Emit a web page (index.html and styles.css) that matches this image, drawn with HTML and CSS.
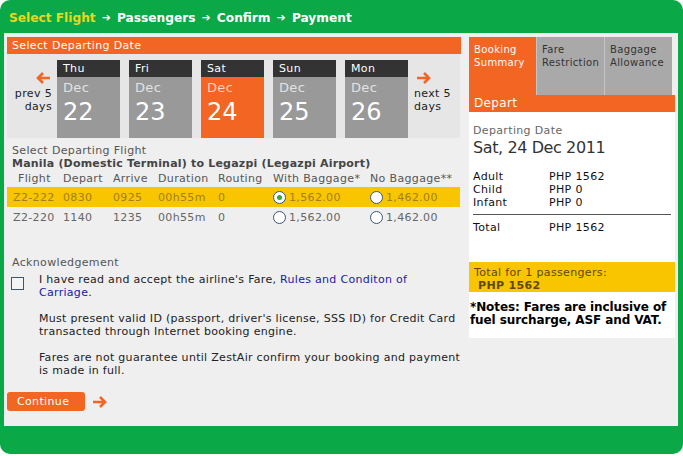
FILE: index.html
```html
<!DOCTYPE html>
<html lang="en">
<head>
  <meta charset="UTF-8">
  <meta name="viewport" content="width=device-width, initial-scale=1.0">
  <title>Select Flight</title>
  <link rel="stylesheet" href="styles.css">
</head>
<body>
  <div class="frame">
    <div class="steps">
      <span class="current">Select Flight</span>
      <span class="sep">&#10132;</span> Passengers
      <span class="sep">&#10132;</span> Confirm
      <span class="sep">&#10132;</span> Payment
    </div>

    <div class="panel">
      <div class="main">
        <div class="bar">Select Departing Date</div>
        <div class="dates">
          <div class="nav prev">
            <svg width="16" height="14" viewBox="0 0 16 14"><path d="M15 7H3M8 2L3 7l5 5" fill="none" stroke="#f26522" stroke-width="2.6"/></svg>
            <span>prev 5<br>days</span>
          </div>
          <div class="day"><div class="dname">Thu</div><div class="dbody"><span class="mon">Dec</span><span class="num">22</span></div></div>
          <div class="day"><div class="dname">Fri</div><div class="dbody"><span class="mon">Dec</span><span class="num">23</span></div></div>
          <div class="day active"><div class="dname">Sat</div><div class="dbody"><span class="mon">Dec</span><span class="num">24</span></div></div>
          <div class="day"><div class="dname">Sun</div><div class="dbody"><span class="mon">Dec</span><span class="num">25</span></div></div>
          <div class="day"><div class="dname">Mon</div><div class="dbody"><span class="mon">Dec</span><span class="num">26</span></div></div>
          <div class="nav next">
            <svg width="16" height="14" viewBox="0 0 16 14"><path d="M1 7h12M8 2l5 5-5 5" fill="none" stroke="#f26522" stroke-width="2.6"/></svg>
            <span>next 5<br>days</span>
          </div>
        </div>

        <div class="flights">
          <div class="label">Select Departing Flight</div>
          <div class="route">Manila (Domestic Terminal) to Legazpi (Legazpi Airport)</div>
          <div class="row head">
            <span>Flight</span><span>Depart</span><span>Arrive</span><span>Duration</span><span>Routing</span><span>With Baggage*</span><span>No Baggage**</span>
          </div>
          <div class="row picked">
            <span>Z2-222</span><span>0830</span><span>0925</span><span>00h55m</span><span>0</span>
            <span><i class="radio on"></i>1,562.00</span><span><i class="radio"></i>1,462.00</span>
          </div>
          <div class="row">
            <span>Z2-220</span><span>1140</span><span>1235</span><span>00h55m</span><span>0</span>
            <span><i class="radio"></i>1,562.00</span><span><i class="radio"></i>1,462.00</span>
          </div>
        </div>

        <div class="ack">
          <div class="label">Acknowledgement</div>
          <div class="ack-body">
            <i class="check"></i>
            <div class="ack-text">
              <p>I have read and accept the airline's Fare, <a href="#">Rules and Conditon of</a><br><a href="#">Carriage</a>.</p>
              <p>Must present valid ID (passport, driver's license, SSS ID) for Credit Card transacted through Internet booking engine.</p>
              <p>Fares are not guarantee until ZestAir confirm your booking and payment is made in full.</p>
            </div>
          </div>
        </div>

        <div class="actions">
          <button class="btn">Continue</button>
          <svg width="16" height="14" viewBox="0 0 16 14"><path d="M1 7h12M8 2l5 5-5 5" fill="none" stroke="#f26522" stroke-width="2.6"/></svg>
        </div>
      </div>

      <div class="side">
        <div class="tabs">
          <div class="tab active">Booking Summary</div>
          <div class="tab">Fare Restriction</div>
          <div class="tab">Baggage Allowance</div>
        </div>
        <div class="side-bar">Depart</div>
        <div class="summary">
          <div class="sum-label">Departing Date</div>
          <div class="sum-date">Sat, 24 Dec 2011</div>
          <div class="fares">
            <span>Adult</span><span>PHP 1562</span>
            <span>Child</span><span>PHP 0</span>
            <span>Infant</span><span>PHP 0</span>
          </div>
          <div class="fares total">
            <span>Total</span><span>PHP 1562</span>
          </div>
        </div>
        <div class="grand">
          Total for 1 passengers:<br>
          <b>PHP 1562</b>
        </div>
        <div class="notes">*Notes: Fares are inclusive of fuel surcharge, ASF and VAT.</div>
      </div>
    </div>
  </div>
</body>
</html>
```

FILE: styles.css
```css
/* Page */
body {
  margin: 0;
  background: #ffffff;
  font-family: 'DejaVu Sans', Verdana, sans-serif;
  font-size: 11px;
  letter-spacing: 0.35px;
  color: #333;
}

.frame {
  width: 683px;
  height: 454px;
  background: #0aa846;
  border-radius: 10px;
}

/* Steps header */
.steps {
  height: 33px;
  padding-left: 9px;
  line-height: 34px;
  font-size: 12.2px;
  font-weight: bold;
  letter-spacing: 0;
  color: #ffffff;
  white-space: nowrap;
}

.steps .current {
  color: #e8d81c;
}

.steps .sep {
  font-size: 10.5px;
  vertical-align: 1px;
  margin: 0 2px;
}

.panel {
  display: flex;
  margin: 0 5px 0 4px;
  height: 393px;
  background: #efefef;
}

/* Main column */
.main {
  width: 454px;
  padding: 4px 0 0 3px;
}

.bar {
  height: 17px;
  line-height: 17px;
  background: #f26522;
  color: #ffffff;
  font-size: 11px;
  padding-left: 5px;
}

.dates {
  display: flex;
  gap: 9px;
  width: 453px;
  height: 84px;
  padding-top: 6px;
  box-sizing: border-box;
  background: #e6e6e6;
}

.nav {
  display: flex;
  flex-direction: column;
  font-size: 11px;
  line-height: 13px;
  color: #222;
}

.nav.prev {
  width: 45px;
  margin-right: -4px;
  align-items: flex-end;
  text-align: right;
  padding-top: 11px;
}

.nav.prev svg {
  margin-right: 1px;
  margin-bottom: 2px;
}

.nav.next {
  padding-top: 11px;
  margin-left: -3px;
}

.nav.next svg {
  margin-left: 2px;
  margin-bottom: 2px;
}

.day {
  width: 63px;
}

.dname {
  height: 17px;
  line-height: 17px;
  background: #333333;
  color: #ffffff;
  font-size: 11px;
  padding-left: 6px;
}

.dbody {
  height: 61px;
  background: #999999;
  padding-left: 6px;
  display: flex;
  flex-direction: column;
}

.mon {
  font-size: 13px;
  line-height: 22px;
  color: #e2e2e2;
}

.num {
  font-size: 24px;
  line-height: 27px;
  letter-spacing: 0;
  color: #ffffff;
}

.day.active .dbody {
  background: #f26522;
}

.day.active .mon {
  color: #ffd2bb;
}

/* Flights */
.flights {
  padding-top: 6px;
}

.label {
  color: #555;
  padding-left: 5px;
  line-height: 13px;
}

.route {
  font-weight: bold;
  color: #444;
  padding-left: 5px;
  line-height: 13px;
  letter-spacing: 0.2px;
}

.row {
  display: grid;
  grid-template-columns: 56px 50px 45px 60px 55px 97px 1fr;
  width: 453px;
  height: 20px;
  align-items: center;
  color: #666;
}

.row span {
  display: flex;
  align-items: center;
}

.row span:first-child {
  padding-left: 6px;
}

.row.head {
  height: 17px;
  color: #555;
}

.row.head span:first-child {
  padding-left: 11px;
}

.row.picked {
  background: #f8c500;
  color: #a57f18;
}

.radio {
  width: 11px;
  height: 11px;
  border: 1px solid #3b5672;
  border-radius: 50%;
  background: #ffffff;
  margin-right: 3px;
  position: relative;
}

.radio.on::after {
  content: "";
  position: absolute;
  left: 3px;
  top: 3px;
  width: 5px;
  height: 5px;
  border-radius: 50%;
  background: #3aa53a;
}

/* Acknowledgement */
.ack {
  margin-top: 29px;
}

.ack-body {
  display: flex;
  margin-top: 4px;
}

.check {
  width: 11px;
  height: 11px;
  border: 1px solid #3b5672;
  background: #f4f4f4;
  margin: 4px 15px 0 4px;
  flex-shrink: 0;
}

.ack-text {
  width: 430px;
  flex-shrink: 0;
  color: #222;
  line-height: 13px;
  letter-spacing: 0.3px;
}

.ack-text p {
  margin: 0 0 13px;
}

.ack-text a {
  color: #1a1aa6;
  text-decoration: none;
}

.actions {
  display: flex;
  align-items: center;
  gap: 7px;
  margin-top: 2px;
}

.btn {
  width: 78px;
  height: 19px;
  border: 0;
  border-radius: 3px;
  background: #f26522;
  color: #ffffff;
  font-family: inherit;
  font-size: 11px;
  letter-spacing: 0.35px;
  text-align: left;
  padding-left: 10px;
}

/* Sidebar */
.side {
  width: 206px;
  margin-left: 8px;
  padding-top: 4px;
}

.tabs {
  display: flex;
  height: 58px;
}

.tab {
  width: 68px;
  background: #a9a9a9;
  color: #333;
  font-size: 10px;
  line-height: 13px;
  padding: 6px 5px 0;
  box-sizing: border-box;
  border-left: 1px solid #c4c4c4;
}

.tab.active {
  width: 67px;
  background: #f26522;
  color: #ffffff;
  border-left: 0;
}

.side-bar {
  height: 17px;
  line-height: 17px;
  background: #f26522;
  color: #ffffff;
  font-size: 12px;
  padding-left: 5px;
}

.summary {
  background: #ffffff;
  padding: 12px 4px 0 4px;
  height: 138px;
}

.sum-label {
  color: #666;
  line-height: 14px;
}

.sum-date {
  font-size: 16px;
  line-height: 19px;
  letter-spacing: -0.4px;
  color: #333;
  margin-bottom: 13px;
}

.fares {
  display: grid;
  grid-template-columns: 76px 1fr;
  line-height: 13px;
  color: #111;
  padding-bottom: 5px;
  border-bottom: 1px solid #555;
}

.fares.total {
  border-bottom: 0;
  padding-top: 6px;
}

.grand {
  background: #f8c500;
  color: #5b4a00;
  padding: 4px 5px 2px;
  line-height: 13px;
  height: 24px;
}

.grand b {
  padding-left: 4px;
}

.notes {
  background: #ffffff;
  font-size: 12px;
  font-weight: bold;
  letter-spacing: -0.1px;
  color: #000;
  line-height: 13px;
  padding: 9px 0 11px 1px;
}
```
